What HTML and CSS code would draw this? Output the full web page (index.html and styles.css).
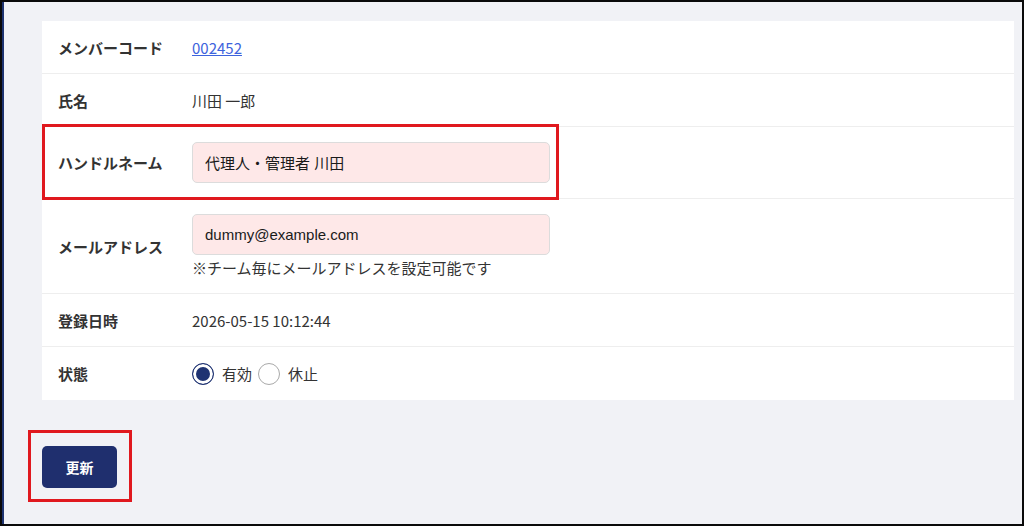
FILE: index.html
```html
<!DOCTYPE html>
<html lang="ja">
<head>
    <meta charset="UTF-8">
    <meta name="viewport" content="width=device-width, initial-scale=1.0">
    <title>メンバー編集</title>
    <link rel="stylesheet" href="styles.css">
</head>
<body>
    <div class="frame">
        <div class="page">
            <div class="card">
                <div class="row">
                    <div class="label">メンバーコード</div>
                    <div class="value"><a href="#" class="code-link">002452</a></div>
                </div>
                <div class="row">
                    <div class="label">氏名</div>
                    <div class="value">川田 一郎</div>
                </div>
                <div class="row row-input">
                    <div class="label">ハンドルネーム</div>
                    <div class="value">
                        <input class="text-input" type="text" value="代理人・管理者 川田">
                    </div>
                    <span class="mark mark-handle"></span>
                </div>
                <div class="row row-input">
                    <div class="label">メールアドレス</div>
                    <div class="value">
                        <input class="text-input" type="text" value="dummy@example.com">
                        <p class="help">※チーム毎にメールアドレスを設定可能です</p>
                    </div>
                </div>
                <div class="row">
                    <div class="label">登録日時</div>
                    <div class="value">2026-05-15 10:12:44</div>
                </div>
                <div class="row">
                    <div class="label">状態</div>
                    <div class="value radios">
                        <label class="radio"><span class="dot checked"></span>有効</label>
                        <label class="radio"><span class="dot"></span>休止</label>
                    </div>
                </div>
            </div>

            <div class="actions">
                <button class="btn-submit">更新</button>
                <span class="mark mark-button"></span>
            </div>
        </div>
    </div>
</body>
</html>
```

FILE: styles.css
```css
html, body {
    margin: 0;
    height: 100%;
}
body {
    font-family: "Noto Sans CJK JP", "Noto Sans", sans-serif;
    color: #333;
    background-color: #000;
}
.frame {
    height: 526px;
    box-sizing: border-box;
    border: 2px solid #0a0a0a;
    background-color: #f1f2f6;
}
.page {
    height: 100%;
    box-sizing: border-box;
    border-left: 2px solid #1e3370;
    padding: 19px 8px 0 38px;
}
.card {
    background-color: #fff;
}
.row {
    position: relative;
    box-sizing: border-box;
    display: flex;
    align-items: center;
    padding: 0 16px;
    min-height: 53px;
    border-bottom: 1px solid #eeeeee;
    font-size: 15px;
}
.row:last-child {
    border-bottom: none;
}
.row-input {
    padding-top: 15px;
    padding-bottom: 15px;
}
.label {
    width: 134px;
    flex-shrink: 0;
    font-weight: bold;
    color: #333;
}
.value {
    color: #333;
}
.code-link {
    color: #3d63dd;
    text-decoration: underline;
}
.text-input {
    display: block;
    box-sizing: border-box;
    width: 358px;
    height: 41px;
    padding: 0 12px;
    font-family: "Liberation Sans", "Noto Sans CJK JP", sans-serif;
    font-size: 15px;
    color: #1a1a1a;
    background-color: #fee8e8;
    border: 1px solid #dcdcdc;
    border-radius: 5px;
    outline: none;
}
.help {
    margin: 2px 0 0;
    font-size: 15px;
    line-height: 21px;
    color: #333;
}
.radios {
    display: flex;
    align-items: center;
    gap: 6px;
}
.radio {
    display: flex;
    align-items: center;
    gap: 8px;
}
.dot {
    width: 22px;
    height: 22px;
    box-sizing: border-box;
    border: 1.5px solid #a9a9a9;
    border-radius: 50%;
    background-color: #fff;
}
.dot.checked {
    border-color: #1f3372;
    background-color: #1f3372;
    box-shadow: inset 0 0 0 3px #fff;
}
.actions {
    position: relative;
    margin-top: 46px;
}
.btn-submit {
    width: 75px;
    height: 42px;
    font-family: "Noto Sans CJK JP", sans-serif;
    font-size: 14px;
    font-weight: bold;
    color: #fff;
    background-color: #1f2f6e;
    border: none;
    border-radius: 5px;
    cursor: pointer;
}
/* red highlight frames */
.mark {
    position: absolute;
    border: 3px solid #e0181e;
    box-sizing: border-box;
    pointer-events: none;
}
.mark-handle {
    left: 0;
    top: -3px;
    width: 517px;
    height: 76px;
}
.mark-button {
    left: -14px;
    top: -16px;
    width: 104px;
    height: 72px;
}
```
